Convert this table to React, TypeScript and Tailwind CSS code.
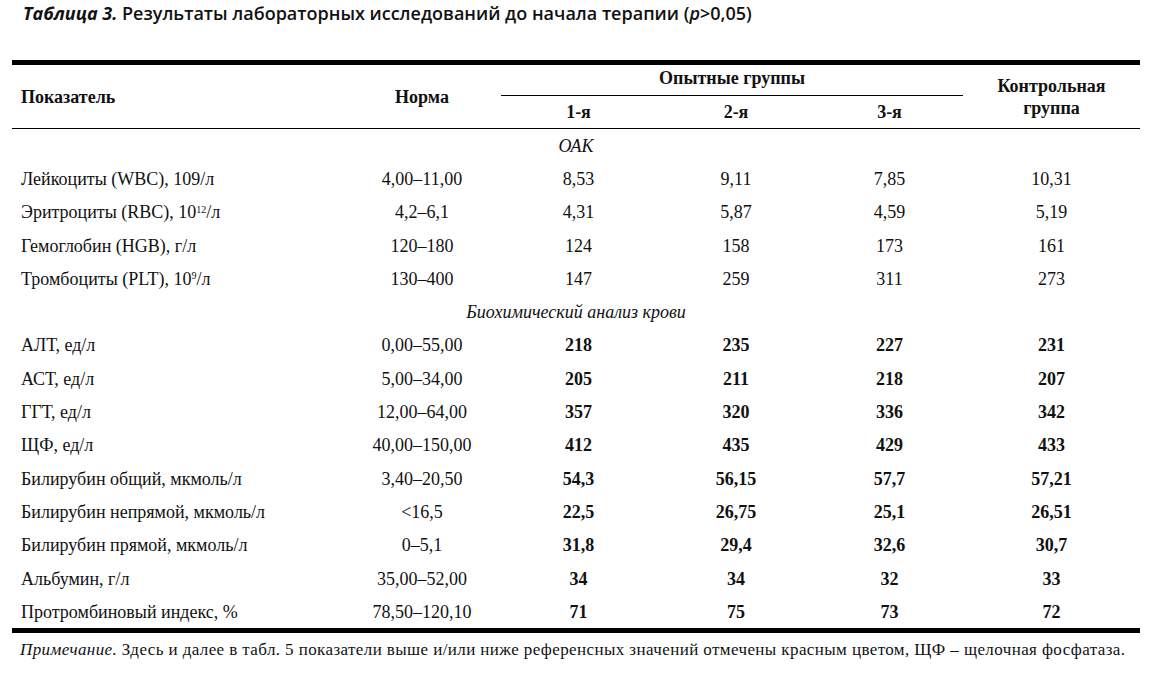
import React from "react";

type Row = { name: React.ReactNode; norm: string; v: string[] };

const oak: Row[] = [
  { name: "Лейкоциты (WBC), 109/л", norm: "4,00–11,00", v: ["8,53", "9,11", "7,85", "10,31"] },
  {
    name: (
      <>
        Эритроциты (RBC), 10<sup className="relative top-[-0.55em] text-[10px] align-baseline">12</sup>/л
      </>
    ),
    norm: "4,2–6,1",
    v: ["4,31", "5,87", "4,59", "5,19"],
  },
  { name: "Гемоглобин (HGB), г/л", norm: "120–180", v: ["124", "158", "173", "161"] },
  {
    name: (
      <>
        Тромбоциты (PLT), 10<sup className="relative top-[-0.55em] text-[10px] align-baseline">9</sup>/л
      </>
    ),
    norm: "130–400",
    v: ["147", "259", "311", "273"],
  },
];

const bio: Row[] = [
  { name: "АЛТ, ед/л", norm: "0,00–55,00", v: ["218", "235", "227", "231"] },
  { name: "АСТ, ед/л", norm: "5,00–34,00", v: ["205", "211", "218", "207"] },
  { name: "ГГТ, ед/л", norm: "12,00–64,00", v: ["357", "320", "336", "342"] },
  { name: "ЩФ, ед/л", norm: "40,00–150,00", v: ["412", "435", "429", "433"] },
  { name: "Билирубин общий, мкмоль/л", norm: "3,40–20,50", v: ["54,3", "56,15", "57,7", "57,21"] },
  { name: "Билирубин непрямой, мкмоль/л", norm: "<16,5", v: ["22,5", "26,75", "25,1", "26,51"] },
  { name: "Билирубин прямой, мкмоль/л", norm: "0–5,1", v: ["31,8", "29,4", "32,6", "30,7"] },
  { name: "Альбумин, г/л", norm: "35,00–52,00", v: ["34", "34", "32", "33"] },
  { name: "Протромбиновый индекс, %", norm: "78,50–120,10", v: ["71", "75", "73", "72"] },
];

const cols = "grid grid-cols-[331px_158px_155px_160px_147px_177px]";

function DataRow({ r, bold }: { r: Row; bold?: boolean }) {
  return (
    <div className={`${cols} h-[33.3px] items-center`}>
      <div className="pl-[9px] whitespace-nowrap">{r.name}</div>
      <div className="text-center">{r.norm}</div>
      {r.v.map((x, i) => (
        <div key={i} className={`text-center ${bold ? "font-bold" : ""}`}>
          {x}
        </div>
      ))}
    </div>
  );
}

function Section({ label }: { label: string }) {
  return <div className="h-[33.3px] flex items-center justify-center italic">{label}</div>;
}

export default function App() {
  return (
    <div className="w-[1157px] h-[673px] bg-white text-[#111]">
      <div
        className="pt-[1px] pl-[23px] text-[18px] leading-[24px] font-semibold whitespace-nowrap"
        style={{ fontFamily: '"Open Sans", "Noto Sans", sans-serif' }}
      >
        <span className="italic font-bold">Таблица 3.</span> Результаты лабораторных исследований до начала терапии (
        <span className="italic">р</span>&gt;0,05)
      </div>
      <div
        className="ml-[12px] mt-[35px] w-[1128px] text-[18px] leading-[22px]"
        style={{ fontFamily: '"Liberation Serif", "Times New Roman", serif' }}
      >
        <div className="border-t-[5px] border-black" />
        {/* header */}
        <div className={`${cols} grid-rows-[31px_32px] font-bold border-b border-black`}>
          <div className="row-span-2 flex items-center pl-[9px]">Показатель</div>
          <div className="row-span-2 flex items-center justify-center">Норма</div>
          <div className="col-span-3 flex items-center justify-center pb-[4px] border-b border-black">
            Опытные группы
          </div>
          <div className="row-span-2 flex items-center justify-center text-center leading-[22px]">
            Контрольная
            <br />
            группа
          </div>
          <div className="flex items-center justify-center">1-я</div>
          <div className="flex items-center justify-center">2-я</div>
          <div className="flex items-center justify-center">3-я</div>
        </div>
        <Section label="ОАК" />
        {oak.map((r, i) => (
          <DataRow key={i} r={r} />
        ))}
        <Section label="Биохимический анализ крови" />
        {bio.map((r, i) => (
          <DataRow key={i} r={r} bold />
        ))}
        <div className="border-t-[5px] border-black" />
        <div className="mt-[7px] pl-[8px] text-[17px] leading-[20px] tracking-[0.4px] whitespace-nowrap">
          <span className="italic">Примечание.</span> Здесь и далее в табл. 5 показатели выше и/или ниже референсных
          значений отмечены красным цветом, ЩФ – щелочная фосфатаза.
        </div>
      </div>
    </div>
  );
}
